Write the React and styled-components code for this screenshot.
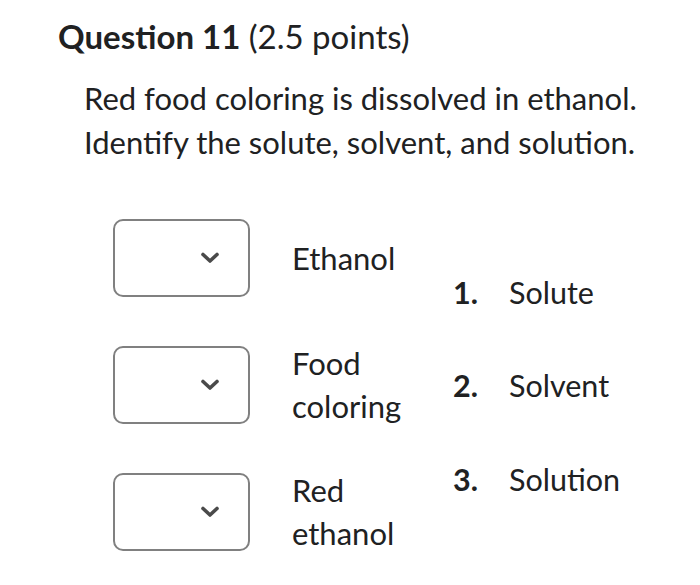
import React from 'react';
import styled, { createGlobalStyle } from 'styled-components';

const GlobalStyle = createGlobalStyle`
  body {
    margin: 0;
    background: #ffffff;
    font-family: Lato, "Noto Sans", sans-serif;
    color: #202122;
  }
`;

const Page = styled.div`
  width: 700px;
  height: 585px;
  padding: 16px 0 0 58px;
  box-sizing: border-box;
`;

const Title = styled.h2`
  margin: 0;
  font-size: 33px;
  line-height: 40px;
  font-weight: 400;

  strong {
    font-weight: 700;
  }
`;

const Prompt = styled.p`
  margin: 20px 0 0 26px;
  font-size: 31px;
  line-height: 44px;
`;

const Matching = styled.div`
  display: flex;
  align-items: center;
  margin: 51px 0 0 55px;
`;

const Pairs = styled.div`
  display: flex;
  flex-direction: column;
  gap: 41px;
`;

const Pair = styled.div`
  display: flex;
  align-items: center;
  gap: 42px;
  width: 340px;
  height: 86px;
`;

const Select = styled.div`
  width: 137px;
  height: 78px;
  box-sizing: border-box;
  border: 2px solid #808080;
  border-radius: 10px;
  display: flex;
  align-items: center;
  justify-content: flex-end;
  padding-right: 28px;
`;

const Label = styled.div`
  font-size: 31px;
  line-height: 43px;
  width: 130px;
`;

const Choices = styled.ol`
  list-style: none;
  margin: 0;
  padding: 0;
  display: flex;
  flex-direction: column;
  gap: 49.5px;
`;

const Choice = styled.li`
  display: flex;
  font-size: 30.5px;
  line-height: 44px;
`;

const Num = styled.span`
  width: 56px;
  font-weight: 700;
`;

const Chevron = () => (
  <svg width="20" height="12" viewBox="0 0 20 12">
    <path d="M3 2.5 L10 9 L17 2.5" fill="none" stroke="#4a4a4a" strokeWidth="3.6" strokeLinecap="round" strokeLinejoin="round" />
  </svg>
);

const pairs = [['Ethanol'], ['Food', 'coloring'], ['Red', 'ethanol']];
const choices = ['Solute', 'Solvent', 'Solution'];

export default function App() {
  return (
    <Page>
      <GlobalStyle />
      <Title>
        <strong>Question 11</strong> (2.5 points)
      </Title>
      <Prompt>
        Red food coloring is dissolved in ethanol.
        <br />
        Identify the solute, solvent, and solution.
      </Prompt>
      <Matching>
        <Pairs>
          {pairs.map((lines, i) => (
            <Pair key={i}>
              <Select>
                <Chevron />
              </Select>
              <Label>
                {lines.map((l, j) => (
                  <div key={j}>{l}</div>
                ))}
              </Label>
            </Pair>
          ))}
        </Pairs>
        <Choices>
          {choices.map((c, i) => (
            <Choice key={c}>
              <Num>{i + 1}.</Num>
              {c}
            </Choice>
          ))}
        </Choices>
      </Matching>
    </Page>
  );
}
